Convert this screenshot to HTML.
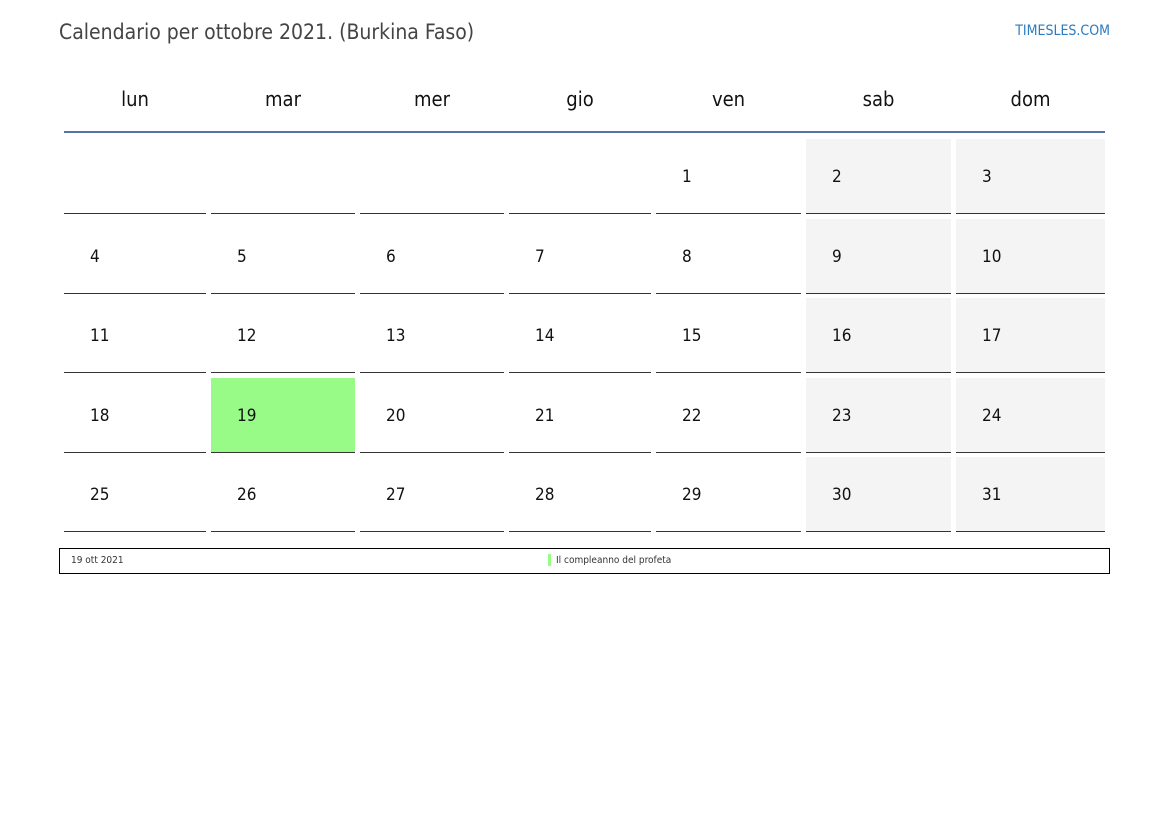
<!DOCTYPE html>
<html><head><meta charset="utf-8"><style>
body{margin:0;width:1169px;height:827px;background:#fff;font-family:"DejaVu Sans Condensed","DejaVu Sans","Liberation Sans",sans-serif;font-stretch:condensed;position:relative;overflow:hidden}
.t{position:absolute;left:59px;top:20px;font-size:21px;color:#444}
.s{position:absolute;right:59px;top:23px;font-size:14px;color:#2a7bc0}
.h{position:absolute;top:87px;font-size:20px;color:#111;text-align:center}
.bl{position:absolute;left:64px;top:131px;width:1041px;height:2px;background:#5473a0}
.c{position:absolute;height:74px;border-bottom:1px solid #333;box-sizing:border-box}
.c span{position:absolute;left:26px;top:28px;font-size:17px;color:#111}
.w{background:#f4f4f4}
.g{background:#98fb88}
.lg{position:absolute;left:59px;top:548px;width:1051px;height:26px;border:1px solid #000;box-sizing:border-box;font-size:10px;color:#333}
</style></head><body>
<div class="t">Calendario per ottobre 2021. (Burkina Faso)</div>
<div class="s">TIMESLES.COM</div>
<div id="hd"></div>
<div class="bl"></div>
<div id="g"></div>
<div class="lg"><span style="position:absolute;left:11px;top:6px">19 ott 2021</span><span style="position:absolute;left:488px;top:5px;width:3px;height:12px;background:#98fb88"></span><span style="position:absolute;left:496px;top:6px">Il compleanno del profeta</span></div>
<script>
var xs=[64,211,360,509,656,806,956],ws=[142,144,144,142,145,145,149];
var names=["lun","mar","mer","gio","ven","sab","dom"];
var hd="";for(var i=0;i<7;i++)hd+='<div class="h" style="left:'+xs[i]+'px;width:'+ws[i]+'px">'+names[i]+'</div>';
document.getElementById("hd").innerHTML=hd;
var ys=[139,219,298,378,457],h="";
for(var r=0;r<5;r++)for(var c=0;c<7;c++){var d=r*7+c-3;var cls="c"+(c>=5?" w":"")+(d==19?" g":"");
h+='<div class="'+cls+'" style="left:'+xs[c]+'px;width:'+ws[c]+'px;top:'+ys[r]+'px;height:75px">'+(d>=1&&d<=31?'<span>'+d+'</span>':'')+'</div>';}
document.getElementById("g").innerHTML=h;
</script>
</body></html>
